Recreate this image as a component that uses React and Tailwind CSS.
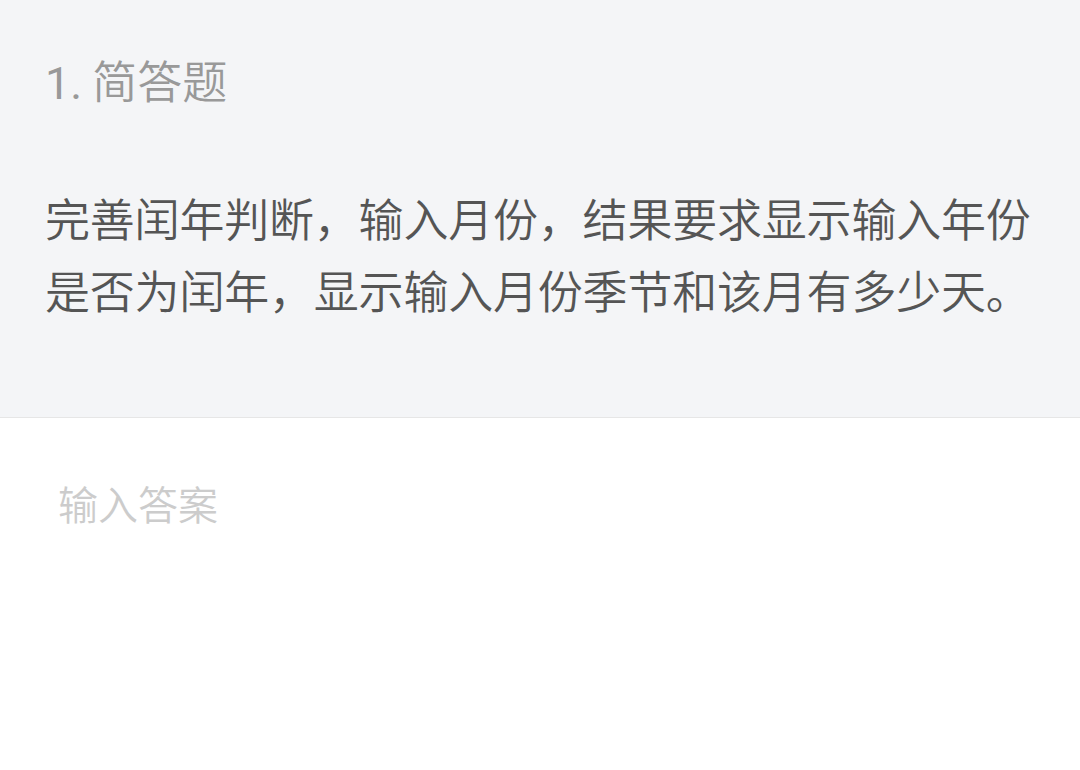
export default function App() {
  return (
    <div className="w-[1080px] h-[770px] bg-white flex flex-col" style={{ fontFamily: '"Noto Sans CJK SC", "Noto Sans", sans-serif' }}>
      <div className="bg-[#f4f5f7] border-b border-[#e6e6e6] px-[45px] pt-[50px] pb-[91px] flex flex-col">
        <div className="h-[60px] text-[45px] leading-[60px] text-[#999999] font-[350]">
          <span className="font-['Roboto'] font-normal leading-none">1.</span> 简答题
        </div>
        <div className="mt-[72px] text-[45px] leading-[72px] text-[#555555] tracking-[-0.2px] font-[350]">
          完善闰年判断，输入月份，结果要求显示输入年份是否为闰年，显示输入月份季节和该月有多少天。
        </div>
      </div>
      <div className="px-[58px] pt-[57px]">
        <div className="text-[40px] leading-[56px] text-[#cccccc] font-[350]">输入答案</div>
      </div>
    </div>
  );
}
